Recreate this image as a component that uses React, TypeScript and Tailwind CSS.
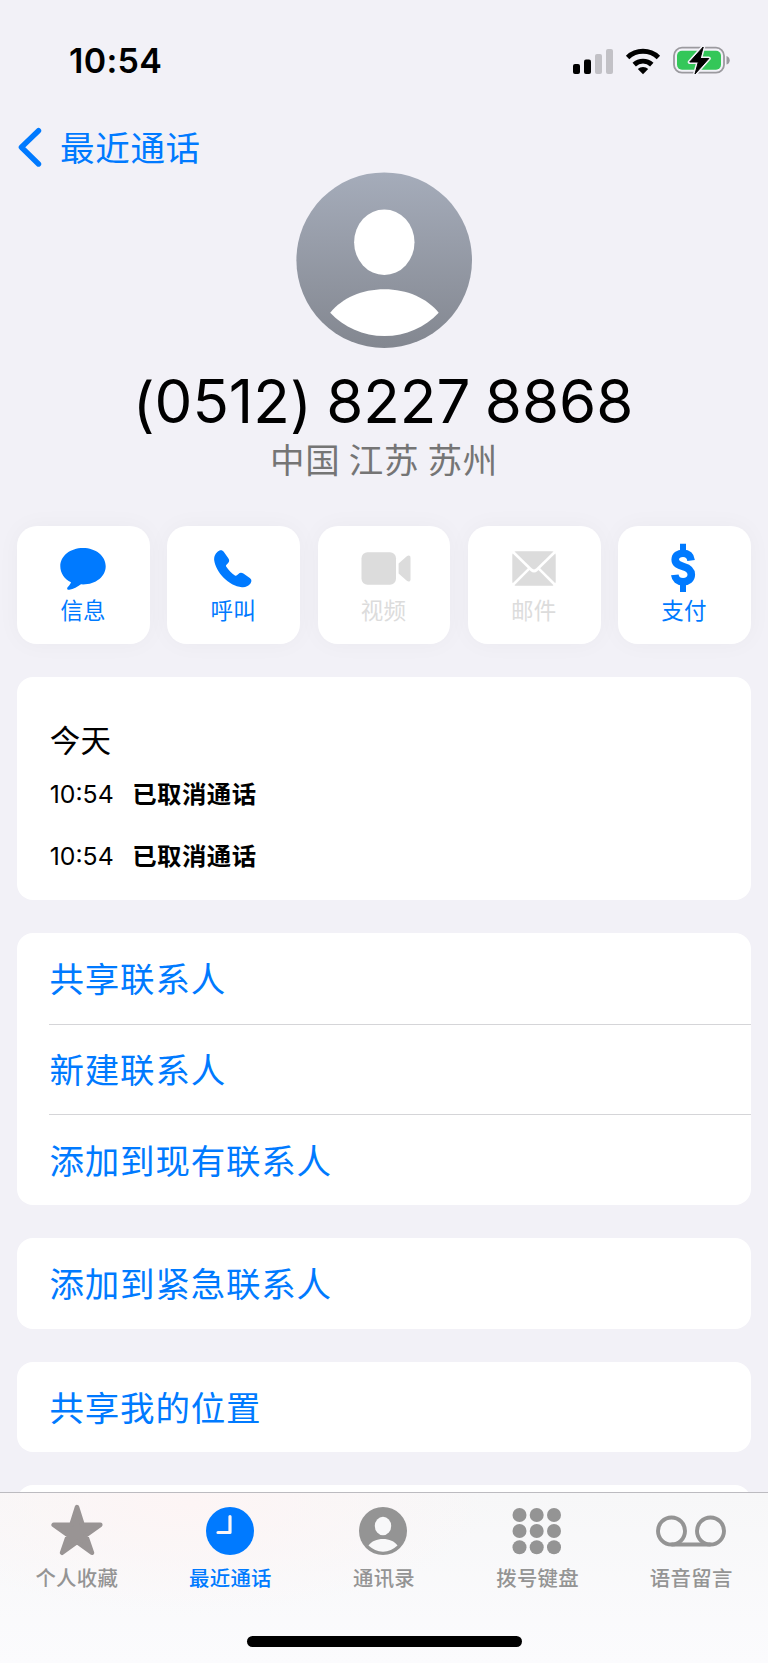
import React from "react";

type Action = { label: string; icon: React.ReactNode; disabled?: boolean };
type Tab = { label: string; icon: React.ReactNode; active?: boolean };

const actions: Action[] = [
  {
    label: "信息",
    icon: (
      <svg width="46" height="42" viewBox="0 0 46 42" fill="currentColor" className="mr-[1px] mt-[22px]">
        <path d="M23 0C35.800 0 45.700 7.900 45.700 18.200S35.800 36.400 23 36.400c-.9 0-1.400-.1-2-.1-3.400 2.500-7.600 4.800-11.700 5.500-2.100.3-2.800-1.200-1.500-2.800 1.300-1.500 2.700-2.900 3.200-4.800C4.500 31 .3 25.300.3 18.200.3 7.900 10.200 0 23 0z" />
      </svg>
    ),
  },
  {
    label: "呼叫",
    icon: (
      <svg width="38" height="38" viewBox="0 0 38 38" fill="currentColor" className="mr-[2px] mt-[24px]">
        <path d="M3.300 1.900C5.800-.3 8.300-.1 9.900 1.900l4.400 6.300c1.400 2.200 1 3.700-.4 5.100l-1.400 1.400c-.6.700-.7 1.200-.2 2 1.800 3 5.600 6.800 8.600 8.700.8.500 1.400.5 2-.1l1.500-1.400c1.500-1.400 3.100-1.600 5-.3l6.400 4.500c1.900 1.500 2.100 3.600.5 5.700-2.200 2.700-5 3.700-8.400 3.400C14.600 36 1.800 22.300.2 10.300-.2 6.900.9 4 3.300 1.900z" />
      </svg>
    ),
  },
  {
    label: "视频",
    disabled: true,
    icon: (
      <svg width="50" height="33" viewBox="0 0 50 33" fill="currentColor" className="ml-[5px] mt-[26px]">
        <rect x="0.500" y="0.300" width="34.500" height="32.500" rx="6" />
        <path d="M37.600 11.500 45.800 4.300c1.800-1.500 3.700-.9 3.700 1.500v21.400c0 2.400-1.900 3-3.700 1.500l-8.200-7.200z" />
      </svg>
    ),
  },
  {
    label: "邮件",
    disabled: true,
    icon: (
      <svg width="44" height="35" viewBox="0 0 44 35" fill="currentColor" className="mt-[25px]">
        <path d="M2.500.6Q3.300.2 4.300.2h35.400q1 0 1.800.4L24.300 17.300q-2.300 2.200-4.600 0z" />
        <path d="M.3 4q0-.9.4-1.500L15.800 17.200.7 32.200Q.3 31.500.3 30.600zM43.700 4q0-.9-.4-1.500L28.200 17.200l15.100 15q.4-.7.4-1.600z" />
        <path d="M2.500 34.200 17.600 19.100l.9.800q3.500 3 7 0l.9-.8 15.100 15.100q-.8.500-1.800.5H4.300q-1 0-1.800-.5z" />
      </svg>
    ),
  },
  {
    label: "支付",
    icon: (
      <svg width="26" height="50" viewBox="0 0 26 50" fill="none" stroke="currentColor" className="mr-[2px] mt-[17px]">
        <path d="M13 .8v8M13 41v8" strokeWidth="6" />
        <path d="M21.100 17.500C20.500 12.500 17.600 10.300 13 10.300c-4.700 0-7.800 2.400-7.800 6.300 0 4.300 3.500 5.600 8.200 7 4.900 1.400 7.900 3.500 7.900 8 0 4.400-3.400 7.200-8.200 7.200-4.900 0-7.800-2.700-8.300-6.900" strokeWidth="7.600" />
      </svg>
    ),
  },
];

const calls = [
  { time: "10:54", status: "已取消通话" },
  { time: "10:54", status: "已取消通话" },
];

const groups = [
  ["共享联系人", "新建联系人", "添加到现有联系人"],
  ["添加到紧急联系人"],
  ["共享我的位置"],
];

const tabs: Tab[] = [
  {
    label: "个人收藏",
    icon: (
      <svg width="54" height="54" viewBox="0 0 54 54" fill="#999494" stroke="#999494" strokeWidth="4.600" strokeLinejoin="round" className="mb-[4px]">
        <path d="m27 5.200 5.500 17.600H50.300L35.900 33.200l6 17.500L27 40l-14.900 10.700 6-17.500L3.700 22.800H21.500z" />
      </svg>
    ),
  },
  {
    label: "最近通话",
    active: true,
    icon: (
      <svg width="48" height="48" viewBox="0 0 48 48">
        <circle cx="24" cy="24" r="24" fill="#007aff" />
        <path d="M24 9.500v16H12" fill="none" stroke="#fbf6f7" strokeWidth="3.200" strokeLinecap="round" strokeLinejoin="round" />
      </svg>
    ),
  },
  {
    label: "通讯录",
    icon: (
      <svg width="48" height="48" viewBox="0 0 48 48" className="mr-[1px]">
        <circle cx="24" cy="24" r="24" fill="#949494" />
        <ellipse cx="24" cy="19" rx="8.200" ry="9.300" fill="#f8f8f9" />
        <path d="M9.500 38.500C12.500 34.300 17.800 32 24 32s11.500 2.300 14.500 6.500C34.500 42.400 29.500 44.700 24 44.700S13.500 42.400 9.500 38.500z" fill="#f8f8f9" />
      </svg>
    ),
  },
  {
    label: "拨号键盘",
    icon: (
      <svg width="50" height="48" viewBox="0 0 50 48" fill="#949494" className="mr-[1px]">
        {[8, 24, 40.2].map((cy) => [7.5, 24.7, 42].map((cx) => <circle key={`${cx}-${cy}`} cx={cx} cy={cy} r="7" />))}
      </svg>
    ),
  },
  {
    label: "语音留言",
    icon: (
      <svg width="70" height="32" viewBox="0 0 70 32" fill="none" stroke="#949494" strokeWidth="3.900">
        <circle cx="15.500" cy="16" r="13.500" />
        <circle cx="54.500" cy="16" r="13.500" />
        <path d="M15.500 29.500h39" />
      </svg>
    ),
  },
];

function StatusBar() {
  return (
    <div className="flex h-[100px] shrink-0 items-start justify-between pl-[69px] pr-[38px]">
      <span className="mt-[40px] text-[34px] font-semibold leading-[42px] tracking-[0.300px]">10:54</span>
      <div className="mt-[46px] flex items-center">
        <svg width="42" height="28" viewBox="0 0 42 28">
          <rect x="1" y="17" width="7" height="10" rx="2" />
          <rect x="12" y="12.500" width="7" height="14.500" rx="2" />
          <rect x="23" y="7" width="7" height="20" rx="2" fill="#c2c1c6" />
          <rect x="34" y="2" width="7" height="25" rx="2" fill="#c2c1c6" />
        </svg>
        <svg width="36" height="28" viewBox="0 0 36 28" className="ml-[11px]" fill="none" stroke="#000" strokeWidth="4.900">
          <path d="M2.600 10.400a22.300 22.300 0 0 1 30.800 0" />
          <path d="M9.200 17.600a12.800 12.800 0 0 1 17.600 0" />
          <path d="M12.800 22a7.600 7.600 0 0 1 10.400 0L18 27.300z" fill="#000" stroke="none" />
        </svg>
        <svg width="57" height="30" viewBox="0 0 57 30" className="ml-[12px]">
          <rect x="1" y="1.700" width="50" height="25" rx="8" fill="none" stroke="#9b9a9f" strokeWidth="1.800" />
          <path d="M53.500 10c2.200.6 3.200 2.400 3.200 4.300s-1 3.700-3.200 4.300z" fill="#9b9a9f" />
          <rect x="4" y="4.700" width="44" height="19" rx="5" fill="#34c759" />
          <path d="M30.200 1 16.700 16h8.600L22 28l13.800-15.500h-8.600z" fill="#000" stroke="#f2f1f7" strokeWidth="4" strokeLinejoin="round" />
          <path d="M30.200 1 16.700 16h8.600L22 28l13.800-15.500h-8.600z" fill="#000" stroke="#000" strokeWidth="1" strokeLinejoin="round" />
        </svg>
      </div>
    </div>
  );
}

export default function App() {
  return (
    <main className="flex h-[1663px] w-[768px] flex-col overflow-hidden bg-[#f2f1f7] font-['Inter','Noto_Sans_CJK_SC',sans-serif] text-black">
      <StatusBar />

      {/* Back button */}
      <button className="flex h-[72px] shrink-0 items-start pl-[17px] text-left text-[#007aff]">
        <svg width="26" height="40" viewBox="0 0 26 40" className="mt-[27px]" fill="none" stroke="currentColor" strokeWidth="5.400" strokeLinecap="round" strokeLinejoin="round">
          <path d="M21.500 3.700 4.400 20.200l17.100 16.800" />
        </svg>
        <span className="ml-[17px] mt-[25px] font-['Noto_Sans_CJK_SC'] text-[34.500px] leading-[42px] tracking-[0.700px]">最近通话</span>
      </button>

      {/* Contact header */}
      <header className="flex h-[354px] shrink-0 flex-col items-center">
        <svg width="176" height="176" viewBox="0 0 176 176" className="shrink-0">
          <defs>
            <linearGradient id="avatar" x1="0" y1="0" x2="0" y2="1">
              <stop offset="0" stopColor="#a5acba" />
              <stop offset="1" stopColor="#838790" />
            </linearGradient>
          </defs>
          <circle cx="88.200" cy="88.200" r="87.800" fill="url(#avatar)" />
          <ellipse cx="88.300" cy="70.200" rx="30.200" ry="32.800" fill="#fff" />
          <path d="M34.200 140.700C46 126 66 117.200 88.500 117.200s42.500 9 54.200 23.500C129 155.200 110 164 88.500 164S48 155.200 34.200 140.700z" fill="#fff" />
        </svg>
        <h1 className="mt-[17px] h-[72px] whitespace-nowrap pr-[2px] text-[60px] leading-[72px] [font-feature-settings:'calt'_0] [word-spacing:-2.500px]">
          <span className="align-[-3px] leading-none">(</span>0512<span className="align-[-3px] leading-none">)</span> 8227 8868
        </h1>
        <p className="whitespace-pre font-['Noto_Sans_CJK_SC'] text-[34.500px] leading-[42px] tracking-[0.700px] text-[#757575]">中国 江苏 苏州</p>
      </header>

      {/* Quick actions */}
      <div className="mx-[17.300px] grid h-[117.500px] shrink-0 grid-cols-5 gap-[17.600px]">
        {actions.map((a) => (
          <button
            key={a.label}
            className={`flex flex-col items-center rounded-[20px] bg-white shadow-[0_0_24px_rgba(0,0,0,0.035)] ${a.disabled ? "text-[#dcdcdc]" : "text-[#007aff]"}`}
          >
            <div className="flex h-[68px] items-start">{a.icon}</div>
            <span className="pr-[1px] font-['Noto_Sans_CJK_SC'] text-[22.500px] leading-[30px] tracking-[0.200px]">{a.label}</span>
          </button>
        ))}
      </div>

      {/* Call log */}
      <section className="mx-[16.700px] mt-[33.500px] h-[223px] shrink-0 rounded-[16px] bg-white pl-[33px] pt-[42px]">
        <h2 className="font-['Noto_Sans_CJK_SC'] text-[30.500px] leading-[40px] tracking-[0.400px]">今天</h2>
        {calls.map((c, i) => (
          <div key={i} className="mt-[3px] flex h-[59px] items-center first-of-type:mt-[5px]">
            <span className="w-[82.500px] text-[24.800px] leading-[30px]">{c.time}</span>
            <span className="-mt-[1px] font-['Noto_Sans_CJK_SC'] text-[24.400px] font-bold leading-[30px] tracking-[0.500px]">{c.status}</span>
          </div>
        ))}
      </section>

      {/* Option groups */}
      {groups.map((rows) => (
        <section key={rows[0]} className="mx-[16.700px] mt-[33px] shrink-0 overflow-hidden rounded-[16px] bg-white pl-[32.800px]">
          {rows.map((label, i) => (
            <button
              key={label}
              className={`flex h-[90.700px] w-full items-center pb-[3px] font-['Noto_Sans_CJK_SC'] text-[34.500px] leading-[42px] tracking-[0.800px] text-[#007aff] ${i > 0 ? "border-t border-[#d5d5d8]" : ""}`}
            >
              {label}
            </button>
          ))}
        </section>
      ))}
      {/* next group, cut off by the tab bar */}
      <section className="-mb-[33.500px] mx-[16.700px] mt-[33px] h-[40px] shrink-0 rounded-t-[16px] bg-white" />

      {/* Tab bar */}
      <nav className="relative flex h-[171px] shrink-0 flex-col items-center border-t border-[#bcbbc0] bg-[#f9f8fa] bg-[radial-gradient(ellipse_300px_110px_at_190px_10px,#fdf5f5,transparent),linear-gradient(to_bottom,#f7f7f8,#fbfbfd)]">
        <div className="grid w-full grid-cols-5">
          {tabs.map((t) => (
            <button key={t.label} className={`flex flex-col items-center ${t.active ? "text-[#007aff]" : "text-[#949494]"}`}>
              <div className="mt-[11px] flex h-[54px] items-center justify-center">{t.icon}</div>
              <span className="mt-[5px] font-['Noto_Sans_CJK_SC'] text-[20.400px] font-medium leading-[28px] tracking-[0.300px]">{t.label}</span>
            </button>
          ))}
        </div>
        <div className="mt-[45px] h-[11px] w-[275px] rounded-full bg-black" />
      </nav>
    </main>
  );
}
